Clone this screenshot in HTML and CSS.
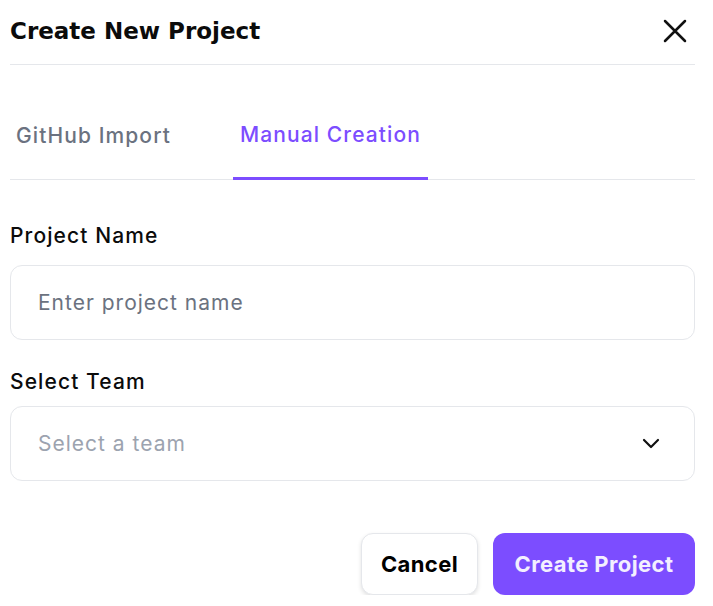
FILE: index.html
```html
<!DOCTYPE html>
<html>
<head>
<meta charset="utf-8">
<link rel="stylesheet" href="styles.css">
</head>
<body>
<div class="dialog">
  <div class="header">
    <h1 class="title">Create New Project</h1>
    <button class="close" aria-label="Close">
      <svg width="24" height="24" viewBox="0 0 24 24"><path d="M2 2L22 22M22 2L2 22" stroke="#111" stroke-width="2.5" stroke-linecap="round" fill="none"/></svg>
    </button>
  </div>
  <div class="tabs">
    <div class="tab">GitHub Import</div>
    <div class="tab active">Manual Creation</div>
  </div>
  <div class="form">
    <div class="field">
      <label class="label">Project Name</label>
      <div class="input placeholder">Enter project name</div>
    </div>
    <div class="field second">
      <label class="label">Select Team</label>
      <div class="input select">
        <span class="placeholder light">Select a team</span>
        <svg width="18" height="12" viewBox="0 0 18 12"><path d="M2 2l7 7 7-7" stroke="#111" stroke-width="2.2" fill="none" stroke-linecap="round" stroke-linejoin="round"/></svg>
      </div>
    </div>
  </div>
  <div class="actions">
    <button class="btn cancel">Cancel</button>
    <button class="btn primary">Create Project</button>
  </div>
</div>
</body>
</html>
```
FILE: styles.css
```css
* { box-sizing: border-box; }
body {
  margin: 0;
  background: #fff;
  font-family: Inter, "Noto Sans", sans-serif;
  color: #111;
}
.dialog {
  width: 695px;
  padding-left: 10px;
}
.header {
  display: flex;
  justify-content: space-between;
  align-items: center;
  height: 65px;
  padding-bottom: 2px;
  border-bottom: 1px solid #e5e7eb;
}
.title {
  margin: 0;
  font-family: "DejaVu Sans", Inter, sans-serif;
  font-size: 23px;
  font-weight: 700;
  color: #0b0b0b;
}
.close {
  border: 0;
  background: none;
  padding: 0;
  margin-right: 8px;
  display: flex;
}
.tabs {
  display: flex;
  height: 115px;
  border-bottom: 1px solid #e5e7eb;
  align-items: stretch;
}
.tab {
  display: flex;
  align-items: center;
  font-size: 21px;
  font-weight: 500;
  letter-spacing: 1.1px;
  color: #6b7280;
  padding: 26px 6px 0;
}
.tab:first-child { width: 223px; }
.tab.active {
  color: #7c4dff;
  border-bottom: 3px solid #7c4dff;
  margin-bottom: -1px;
  padding: 26px 7px 0;
}
.form {
  padding-top: 44px;
  display: flex;
  flex-direction: column;
  gap: 30px;
}
.field {
  display: flex;
  flex-direction: column;
  gap: 17px;
}
.field.second { gap: 12px; }
.label {
  font-size: 21px;
  font-weight: 500;
  letter-spacing: 1.1px;
  color: #0b0b0b;
  line-height: 24px;
}
.input {
  height: 75px;
  border: 1px solid #e5e7eb;
  border-radius: 12px;
  padding: 0 27px;
  display: flex;
  align-items: center;
  font-size: 21px;
  letter-spacing: 1px;
}
.placeholder { color: #6b7280; }
.placeholder.light { color: #9ca3af; }
.select {
  justify-content: space-between;
  padding-right: 34px;
}
.actions {
  display: flex;
  justify-content: flex-end;
  gap: 15px;
  margin-top: 52px;
}
.btn {
  height: 62px;
  border-radius: 12px;
  font-family: Inter, Roboto, sans-serif;
  font-size: 22px;
  font-weight: 700;
  letter-spacing: 0.4px;
  padding: 0;
  cursor: pointer;
}
.cancel {
  background: #fff;
  border: 1px solid #e5e7eb;
  color: #000;
  width: 117px;
  box-shadow: 0 2px 4px rgba(0,0,0,0.12);
}
.primary {
  background: #7c4dff;
  border: 0;
  color: #f3efff;
  width: 202px;
}
```
